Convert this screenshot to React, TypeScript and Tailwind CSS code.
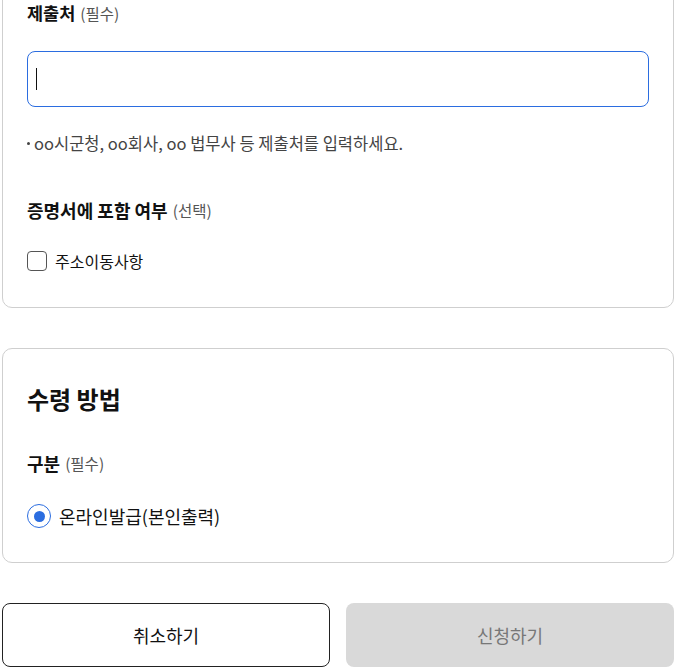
import React from "react";

export default function App() {
  const font = { fontFamily: '"Noto Sans CJK KR", "Noto Sans", sans-serif' };
  return (
    <div className="w-[678px] h-[672px] overflow-hidden bg-white text-[#111]" style={font}>
      <div className="ml-[2px] w-[672px]">
        <div className="-mt-[24px] border border-[#cfcfcf] rounded-[10px] px-6 pt-6 pb-[34px]">
          <div className="flex items-center h-6">
            <span className="text-[17.5px] font-bold leading-6">제출처</span>
            <span className="ml-[5px] text-[15.5px] text-[#555] leading-6">(필수)</span>
          </div>
          <div className="mt-[26px] h-[56px] w-[622px] rounded-[8px] border border-[#2b6de0] flex items-center pl-[8px]">
            <div className="w-px h-[22px] bg-[#111]" />
          </div>
          <div className="mt-[26px] flex items-center h-5 text-[16.5px] text-[#444] leading-5">
            <span className="w-[3px] h-[3px] rounded-full bg-[#444] mr-[4px]" />
            <span>oo시군청, oo회사, oo 법무사 등 제출처를 입력하세요.</span>
          </div>
          <div className="mt-[45px] flex items-center h-6">
            <span className="text-[18px] font-bold leading-6">증명서에 포함 여부</span>
            <span className="ml-[5px] text-[15.5px] text-[#555] leading-6">(선택)</span>
          </div>
          <div className="mt-[27px] flex items-center h-6">
            <span className="w-[20px] h-[20px] rounded-[4px] border border-[#555] box-border" />
            <span className="ml-2 text-[16px] leading-6">주소이동사항</span>
          </div>
        </div>

        <div className="mt-10 border border-[#cfcfcf] rounded-[10px] px-6 pt-[34px] pb-[34px]">
          <div className="text-[24px] font-bold leading-8">수령 방법</div>
          <div className="mt-[36px] flex items-center h-6">
            <span className="text-[18px] font-bold leading-6">구분</span>
            <span className="ml-[5px] text-[15.5px] text-[#555] leading-6">(필수)</span>
          </div>
          <div className="mt-[29px] flex items-center h-6">
            <span className="w-6 h-6 rounded-full border-[1.5px] border-[#2b6de0] flex items-center justify-center">
              <span className="w-[11px] h-[11px] rounded-full bg-[#2b6de0]" />
            </span>
            <span className="ml-2 text-[18px] leading-6">온라인발급(본인출력)</span>
          </div>
        </div>

        <div className="mt-10 flex gap-4">
          <button className="w-[328px] h-16 rounded-[8px] border border-[#222] bg-white text-[18px] text-[#111]">
            취소하기
          </button>
          <button className="w-[328px] h-16 rounded-[8px] bg-[#d9d9d9] text-[18px] text-[#777]">
            신청하기
          </button>
        </div>
      </div>
    </div>
  );
}
